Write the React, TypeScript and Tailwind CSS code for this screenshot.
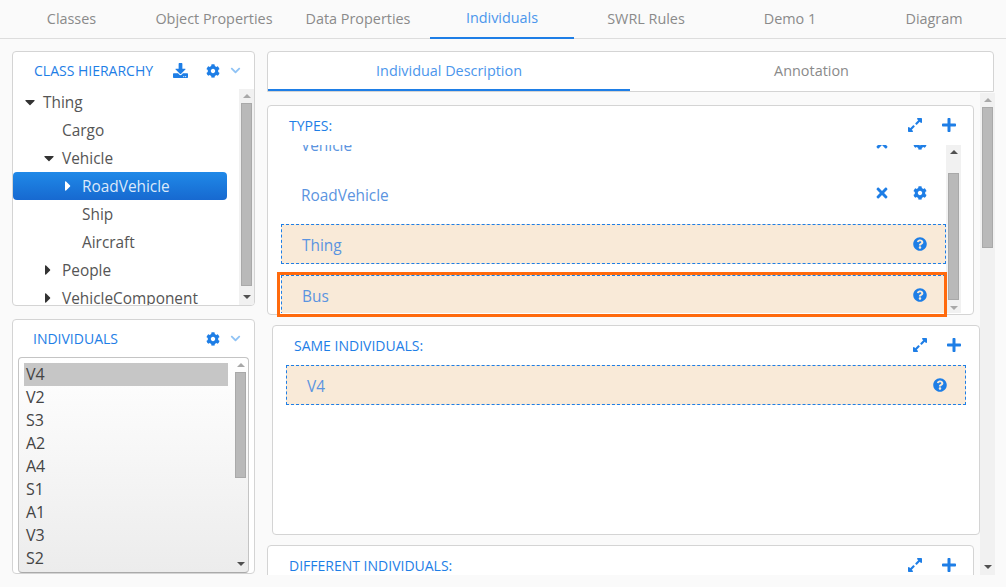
import React from "react";
import { FaCog, FaChevronDown, FaDownload, FaExpandAlt, FaPlus, FaTimes, FaQuestionCircle, FaCaretDown, FaCaretRight } from "react-icons/fa";

const tabs = ["Classes", "Object Properties", "Data Properties", "Individuals", "SWRL Rules", "Demo 1", "Diagram"];

function Scrollbar({ thumb, bg = "bg-[#f1f1f1]", up = "border-b-[#a8a8a8]", down = "border-t-[#505050]" }: { thumb: string; bg?: string; up?: string; down?: string }) {
  return (
    <div className={`w-[15px] shrink-0 self-stretch ${bg} flex flex-col items-center`}>
      <div className="h-[14px] shrink-0 w-full flex items-center justify-center">
        <div className={`w-0 h-0 border-x-[4px] border-x-transparent border-b-[4px] ${up}`} />
      </div>
      <div className={`${thumb} w-[11px] bg-[#b9b9b9] border border-[#a9a9a9] shrink-0`} />
      <div className="mt-auto h-[16px] shrink-0 w-full flex items-center justify-center">
        <div className={`w-0 h-0 border-x-[4px] border-x-transparent border-t-[4px] ${down}`} />
      </div>
    </div>
  );
}

function TreeRow({ label, indent, caret, selected }: { label: string; indent: string; caret?: "down" | "right"; selected?: boolean }) {
  return (
    <div className={`h-[28px] flex items-center ${indent} ${selected ? "rounded-[4px] bg-gradient-to-b from-[#2089e8] to-[#1769d0] text-[#dbe9fa] w-[214px]" : "text-[#555]"}`}>
      <span className="w-[19px] shrink-0 flex items-center">
        {caret === "down" && <FaCaretDown className="text-[#333] text-[16px] -ml-[2px]" />}
        {caret === "right" && <FaCaretRight className={`text-[16px] -ml-[3px] ${selected ? "text-white" : "text-[#333]"}`} />}
      </span>
      <span className="pt-[2px]">{label}</span>
    </div>
  );
}

function SectionHead({ title, pad }: { title: string; pad: string }) {
  return (
    <div className={`h-[39px] pb-[2px] shrink-0 flex items-center justify-between ${pad} text-[#1e7ee6]`}>
      <span className="text-[14px] font-normal pt-[1px]">{title}</span>
      <span className="flex items-center gap-[18px]">
        <FaExpandAlt className="text-[16px]" />
        <FaPlus className="text-[16px]" />
      </span>
    </div>
  );
}

function DashedRow({ label }: { label: string }) {
  return (
    <div className="h-[40px] flex items-center justify-between pl-[20px] pr-[18px] border border-dashed border-[#1e7ee6] bg-[#f9ead8] text-[#5b94e0] text-[15.4px]">
      <span className="pt-[3px]">{label}</span>
      <FaQuestionCircle className="text-[#1e7ee6] text-[14px]" />
    </div>
  );
}

function PlainRow({ label, clip }: { label: string; clip?: boolean }) {
  return (
    <div className={`${clip ? "-mt-[27px]" : ""} h-[50px] flex items-center justify-between pl-[20px] pr-[19px] text-[#5b94e0] text-[15.4px]`}>
      <span className="pt-[6px]">{label}</span>
      <span className="flex items-center gap-[23px] text-[#1e7ee6]">
        <FaTimes className="text-[16px]" />
        <FaCog className="text-[14px]" />
      </span>
    </div>
  );
}

export default function App() {
  return (
    <div className="w-[1006px] h-[587px] overflow-hidden bg-[#fafafa] flex flex-col font-['Open_Sans',sans-serif]">
      <nav className="h-[39px] shrink-0 border-b border-[#dddddd]">
        <div className="-ml-[2px] grid grid-cols-[repeat(7,144px)] text-[14.4px]">
          {tabs.map((t) => (
            <div key={t} className={`h-[39px] flex items-center justify-center pb-[2px] ${t === "Classes" ? "pl-[3px]" : ""} ${t === "Individuals" ? "text-[#4b96ec] border-b-2 border-[#1e7ee6]" : "text-[#8a8a8a]"}`}>
              {t}
            </div>
          ))}
        </div>
      </nav>

      <div className="flex pt-[12px] pl-[12px] gap-[12px] h-[536px] shrink-0">
        <aside className="w-[243px] shrink-0 flex flex-col gap-[13px]">
          <section className="h-[255px] shrink-0 bg-white border border-[#d4d4d4] rounded-[4px] overflow-hidden flex flex-col">
            <div className="h-[37px] shrink-0 flex items-center justify-between pl-[21px] pr-[13px] text-[#1e7ee6]">
              <span className="text-[14px]">CLASS HIERARCHY</span>
              <span className="flex items-center">
                <FaDownload className="text-[15px] mr-[18px]" />
                <FaCog className="text-[14px] mr-[10px]" />
                <FaChevronDown className="text-[11px] text-[#90c3f5]" />
              </span>
            </div>
            <div className="flex-1 flex min-h-0">
              <div className="flex-1 min-w-0 overflow-hidden text-[15.4px] -mt-[1px]">
                <TreeRow label="Thing" indent="pl-[11px]" caret="down" />
                <TreeRow label="Cargo" indent="pl-[30px]" />
                <TreeRow label="Vehicle" indent="pl-[30px]" caret="down" />
                <TreeRow label="RoadVehicle" indent="pl-[50px]" caret="right" selected />
                <TreeRow label="Ship" indent="pl-[50px]" />
                <TreeRow label="Aircraft" indent="pl-[50px]" />
                <TreeRow label="People" indent="pl-[30px]" caret="right" />
                <TreeRow label="VehicleComponent" indent="pl-[30px]" caret="right" />
              </div>
              <Scrollbar thumb="h-[183px]" />
            </div>
          </section>

          <section className="h-[255px] shrink-0 bg-white border border-[#d4d4d4] rounded-[4px] overflow-hidden flex flex-col px-[5px]">
            <div className="h-[37px] shrink-0 flex items-center justify-between pl-[15px] pr-[8px] text-[#1e7ee6]">
              <span className="text-[14px]">INDIVIDUALS</span>
              <span className="flex items-center">
                <FaCog className="text-[14px] mr-[10px]" />
                <FaChevronDown className="text-[11px] text-[#90c3f5]" />
              </span>
            </div>
            <div className="flex-1 min-h-0 flex rounded-[4px] border border-[#c4c4c4] border-b-[#aaa] bg-gradient-to-b from-white to-[#ececec] overflow-hidden">
              <ul className="flex-1 min-w-0 p-[5px] text-[16px] leading-[23px] text-[#444]">
                {["V4", "V2", "S3", "A2", "A4", "S1", "A1", "V3", "S2"].map((n, i) => (
                  <li key={n} className={`px-[2px] ${i === 0 ? "bg-[#c6c6c6]" : ""}`}>{n}</li>
                ))}
              </ul>
              <Scrollbar thumb="h-[106px]" bg="bg-transparent" />
            </div>
          </section>
        </aside>

        <main className="w-[728px] shrink-0 flex flex-col gap-[1px] min-h-0">
          <div className="h-[41px] w-[727px] shrink-0 bg-white border border-[#d4d4d4] rounded-t-[4px] flex text-[14.4px]">
            <div className="w-[362px] flex items-center justify-center text-[#4b96ec] border-b-2 border-[#1e7ee6]">Individual Description</div>
            <div className="flex-1 flex items-center justify-center pb-[2px] text-[#8a8a8a]">Annotation</div>
          </div>

          <div className="flex-1 min-h-0 flex overflow-hidden">
            <div className="w-[713px] shrink-0 flex flex-col gap-[10px] pt-[12px] overflow-hidden">
              <section className="relative h-[210px] shrink-0 w-[707px] bg-white border border-[#d4d4d4] rounded-[4px] flex flex-col pl-[13px] pr-[12px]">
                <SectionHead title="TYPES:" pad="pl-[8px] pr-[4px]" />
                <div className="flex-1 min-h-0 flex pb-[1px]">
                  <div className="flex-1 min-w-0 overflow-hidden">
                    <PlainRow label="Vehicle" clip />
                    <PlainRow label="RoadVehicle" />
                    <div className="flex flex-col gap-[11px] mt-[6px]">
                      <DashedRow label="Thing" />
                      <DashedRow label="Bus" />
                    </div>
                  </div>
                  <Scrollbar thumb="mt-[14px] h-[127px]" up="border-b-[#505050]" down="border-t-[#a8a8a8]" />
                </div>
                <div className="absolute left-[9px] top-[166px] w-[670px] h-[45px] border-[3px] border-[#ff6a0d]" />
              </section>

              <section className="h-[210px] shrink-0 ml-[5px] w-[708px] bg-white border border-[#d4d4d4] rounded-[4px] flex flex-col px-[13px]">
                <SectionHead title="SAME INDIVIDUALS:" pad="pl-[8px] pr-[4px]" />
                <DashedRow label="V4" />
              </section>

              <section className="h-[60px] shrink-0 w-[707px] bg-white border border-[#d4d4d4] rounded-t-[4px] flex flex-col pl-[13px] pr-[12px]">
                <SectionHead title="DIFFERENT INDIVIDUALS:" pad="pl-[8px] pr-[4px]" />
              </section>
            </div>
            <Scrollbar thumb="h-[141px]" />
          </div>
        </main>
      </div>
    </div>
  );
}
